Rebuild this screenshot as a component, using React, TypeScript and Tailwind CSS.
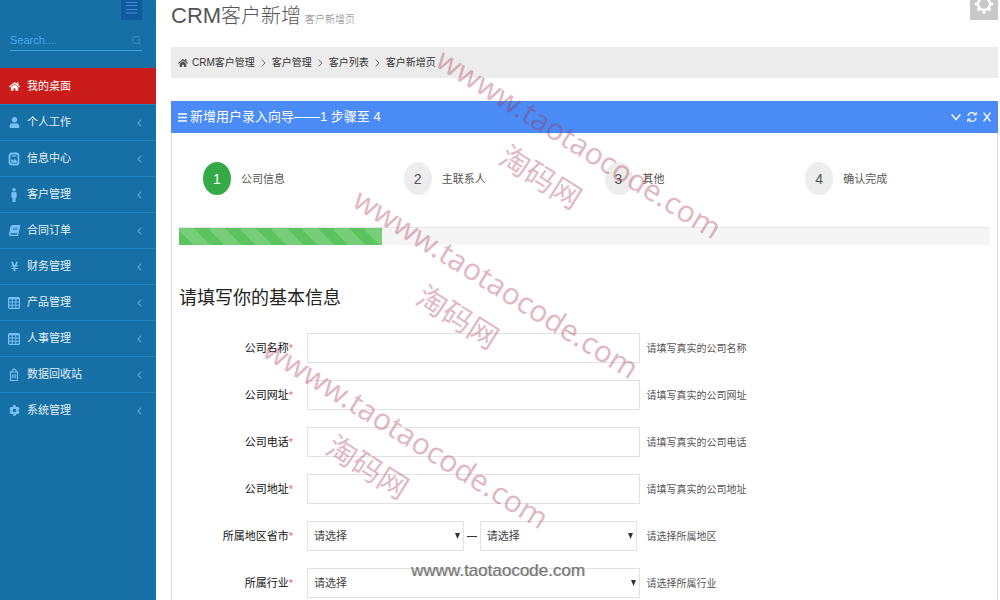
import type { ReactNode } from "react";
import { FaBook, FaCog, FaHome, FaMale, FaUser, FaYenSign } from "react-icons/fa";
import { Search } from "lucide-react";

const InfoIcon = () => (
  <svg viewBox="0 0 12 14" className="w-3 h-3.5" fill="none" stroke="currentColor">
    <rect x="1.5" y="1.5" width="9" height="11" rx="2" strokeWidth="1.8" />
    <path d="M3.5 4h5" strokeWidth="1.2" />
    <path d="M3.5 10.5V7.5l2 1.5 1-2 2 2v1.5z" fill="currentColor" strokeWidth="0.6" />
  </svg>
);

const TableIcon = () => (
  <svg viewBox="0 0 12 12" className="w-3 h-3" fill="none" stroke="currentColor">
    <rect x="0.6" y="0.6" width="10.8" height="10.8" rx="1" strokeWidth="1.2" />
    <path d="M0.6 1.6h10.8" strokeWidth="1.6" />
    <path d="M4.2 1v10.4M7.8 1v10.4M0.6 5h10.8M0.6 8.2h10.8" strokeWidth="1" />
  </svg>
);

const BinIcon = () => (
  <svg viewBox="0 0 12 14" className="w-3 h-3.5" fill="none" stroke="currentColor">
    <path d="M1.5 4h9M2.5 4v8.5h7V4M4 4V2.2L6 1l2 1.2V4" strokeWidth="1.1" />
    <path d="M4.3 6.2v4M6 6.2v4M7.7 6.2v4" strokeWidth="0.9" />
  </svg>
);

const menu: { label: string; icon: ReactNode; active?: boolean }[] = [
  { label: "我的桌面", icon: <FaHome />, active: true },
  { label: "个人工作", icon: <FaUser /> },
  { label: "信息中心", icon: <InfoIcon /> },
  { label: "客户管理", icon: <FaMale className="w-3.5 h-3.5 shrink-0" /> },
  { label: "合同订单", icon: <FaBook className="-skew-x-12" /> },
  { label: "财务管理", icon: <FaYenSign /> },
  { label: "产品管理", icon: <TableIcon /> },
  { label: "人事管理", icon: <TableIcon /> },
  { label: "数据回收站", icon: <BinIcon /> },
  { label: "系统管理", icon: <FaCog /> },
];

const crumbs = ["CRM客户管理", "客户管理", "客户列表", "客户新增页"];
const steps = ["公司信息", "主联系人", "其他", "确认完成"];

const textFields = [
  { id: "name", label: "公司名称", hint: "请填写真实的公司名称" },
  { id: "site", label: "公司网址", hint: "请填写真实的公司网址" },
  { id: "phone", label: "公司电话", hint: "请填写真实的公司电话" },
  { id: "address", label: "公司地址", hint: "请填写真实的公司地址" },
];

const watermarks = [
  { url: "left-[449px] top-[41px]", name: "left-[512px] top-[138px]" },
  { url: "left-[366px] top-[181px]", name: "left-[429px] top-[278px]" },
  { url: "left-[276px] top-[331px]", name: "left-[339px] top-[428px]" },
];

function Sidebar() {
  return (
    <aside className="w-[156px] shrink-0 bg-[#166fa5]">
      <div className="flex justify-end pr-3.5">
        <button aria-label="menu" className="w-[21px] h-5 bg-[#0f5c9c] text-[#3f8fd0] flex justify-center">
          <svg viewBox="0 0 11 14" className="w-[11px] h-3.5" stroke="currentColor">
            <path d="M0 2.5h11M0 5.5h11M0 9.5h11M0 13h11" />
          </svg>
        </button>
      </div>
      <form className="ml-2.5 mr-3.5 mt-2.5 mb-[17px] h-[21px] border-b border-[#3ba0dc] flex items-center">
        <input
          aria-label="Search"
          placeholder="Search...."
          className="min-w-0 flex-1 text-[11px] text-white placeholder:text-[#4aa9e6] outline-none"
        />
        <button type="button" aria-label="Search" className="text-[#3592cc]">
          <Search size={11} />
        </button>
      </form>
      <nav>
        <ul>
          {menu.map((m) => (
            <li key={m.label}>
              <a
                href="#"
                className={
                  m.active
                    ? "flex items-center h-9 px-2 pt-px text-[11px] text-white bg-[#cb1c1c]"
                    : "flex items-center h-9 px-2 text-[11px] text-[#e3f1fa] border-t border-[#1f86c6]"
                }
              >
                <span className={m.active ? "w-3 mr-[7px] flex justify-center" : "w-3 mr-[7px] flex justify-center text-[#74c2f3]"}>
                  {m.icon}
                </span>
                {m.label}
                {!m.active && (
                  <svg viewBox="0 0 5 8" className="w-[5px] h-2 ml-auto mr-1.5" fill="none" stroke="#4aa9e6" strokeWidth="1.2">
                    <path d="M4.2 0.6L1 4l3.2 3.4" />
                  </svg>
                )}
              </a>
            </li>
          ))}
        </ul>
      </nav>
    </aside>
  );
}

function Row({ id, label, hint, children }: { id: string; label: string; hint: string; children: ReactNode }) {
  return (
    <div className="flex items-center h-[30px]">
      <label htmlFor={id} className="w-32 shrink-0 pr-3.5 flex justify-end text-[11px] text-[#111]">
        <span>{label}</span>
        <span className="text-[#e86a6a]">*</span>
      </label>
      {children}
      <span className="ml-[7px] text-[10px] text-[#555] whitespace-nowrap">{hint}</span>
    </div>
  );
}

function Select({ id, label }: { id: string; label: string }) {
  return (
    <div className="relative flex-1">
      <select
        id={id}
        aria-label={label}
        className="block w-full h-[30px] pl-1.5 text-[11px] text-[#444] bg-white border border-[#e2e2e2] appearance-none outline-none"
      >
        <option>请选择</option>
      </select>
      <svg viewBox="0 0 5 6" className="absolute right-1 top-3 w-[5px] h-1.5 pointer-events-none" fill="#333">
        <path d="M0 0h5L2.5 6z" />
      </svg>
    </div>
  );
}

function Wizard() {
  return (
    <section className="flex-1 flex flex-col border-x border-[#d9dfe6]">
      <header className="-mx-px h-8 px-[7px] flex items-center bg-[#4a8bf5] text-white">
        <svg viewBox="0 0 9 9" className="w-[9px] h-[9px] mr-[3px]" stroke="currentColor" strokeWidth="1.7">
          <path d="M0 1h9M0 4.5h9M0 8h9" />
        </svg>
        <h2 className="text-[13px]">新增用户录入向导——1 步骤至 4</h2>
        <div className="ml-auto flex items-center gap-1.5">
          <button aria-label="collapse">
            <svg viewBox="0 0 10 10" className="w-2.5 h-2.5" fill="none" stroke="currentColor" strokeWidth="1.4">
              <path d="M0.7 2.5L5 7.5l4.3-5" />
            </svg>
          </button>
          <button aria-label="reload">
            <svg viewBox="0 0 10 12" className="w-2.5 h-3" fill="none" stroke="currentColor" strokeWidth="1.3">
              <path d="M1 5C1.4 2.8 3 1.6 5 1.6c1.4 0 2.6.7 3.5 1.9M9 7c-.4 2.2-2 3.4-4 3.4-1.4 0-2.6-.7-3.5-1.9" />
              <path d="M9.2 1v3H6.4M.8 11V8h2.8" strokeWidth="1" />
            </svg>
          </button>
          <button aria-label="close">
            <svg viewBox="0 0 8 10" className="w-2 h-2.5" fill="none" stroke="currentColor" strokeWidth="1.4">
              <path d="M0.6 0.6l6.8 8.8M7.4 0.6L0.6 9.4" />
            </svg>
          </button>
        </div>
      </header>

      <div className="px-[7px]">
        <ol className="mt-[29px] mr-2 grid grid-cols-4">
          {steps.map((s, i) => (
            <li key={s} className="pl-6 flex items-center text-[11px] text-[#555]">
              <span
                className={
                  i === 0
                    ? "w-7 h-[33px] mr-2.5 rounded-[50%] bg-[#35aa47] text-white text-sm flex items-center justify-center"
                    : "w-7 h-[33px] mr-2.5 rounded-[50%] bg-[#ededed] text-[#555] text-sm flex items-center justify-center"
                }
              >
                {i + 1}
              </span>
              <span className="pt-0.5">{s}</span>
            </li>
          ))}
        </ol>

        <div className="mt-8 h-[18px] bg-[#f5f5f5] border-t border-[#e6e6e6]">
          <div className="w-1/4 h-[17px] bg-[#5cc45e] bg-[linear-gradient(45deg,rgba(255,255,255,.17)_25%,transparent_25%,transparent_50%,rgba(255,255,255,.17)_50%,rgba(255,255,255,.17)_75%,transparent_75%)] bg-[length:31px_36px]" />
        </div>

        <h3 className="mt-10 mb-[22px] text-lg leading-[26px] text-[#222]">请填写你的基本信息</h3>

        <form className="flex flex-col gap-[17px]">
          {textFields.map((f) => (
            <Row key={f.id} id={f.id} label={f.label} hint={f.hint}>
              <input
                id={f.id}
                type="text"
                className="w-[41%] h-[30px] px-2 text-[11px] border border-[#e2e2e2] outline-none"
              />
            </Row>
          ))}
          <Row id="province" label="所属地区省市" hint="请选择所属地区">
            <div className="w-[41%] pr-[3px] flex items-center">
              <Select id="province" label="省" />
              <span className="w-2.5 h-px mx-[3px] bg-[#333]" />
              <Select id="city" label="市" />
            </div>
          </Row>
          <Row id="industry" label="所属行业" hint="请选择所属行业">
            <div className="w-[41%] flex">
              <Select id="industry" label="所属行业" />
            </div>
          </Row>
        </form>
      </div>
    </section>
  );
}

export default function App() {
  return (
    <div className="relative flex min-h-screen overflow-hidden bg-white font-['Liberation_Sans','Noto_Sans_CJK_SC',sans-serif]">
      <Sidebar />
      <main className="flex-1 min-w-0 pl-[15px] pr-0.5 flex flex-col">
        <div className="flex items-start justify-between h-[47px]">
          <h1 className="text-[22px] leading-8 text-[#555] font-light">
            CRM<span className="text-[20px]">客户新增</span>
            <small className="ml-1 text-[10px] text-[#777]">客户新增页</small>
          </h1>
          <button aria-label="settings" className="w-7 h-5 bg-[#c8c8c8] text-white flex justify-center overflow-hidden">
            <svg viewBox="0 0 20 20" className="w-5 h-5 -mt-1.5 shrink-0" fill="none" stroke="currentColor">
              <circle cx="10" cy="10" r="6" strokeWidth="2.4" />
              <path
                d="M10 1v3M10 16v3.4M1 10h3M16 10h3M3.6 3.6l2.2 2.2M14.2 14.2l2.2 2.2M3.6 16.4l2.2-2.2M14.2 5.8l2.2-2.2"
                strokeWidth="3"
              />
            </svg>
          </button>
        </div>

        <ul className="h-[31px] mb-[23px] px-[7px] flex items-center bg-[#ececec] text-[10px] text-[#333]">
          <li className="mr-1 text-[#555]">
            <FaHome className="w-2.5 h-2.5" />
          </li>
          {crumbs.map((c, i) => (
            <li key={c} className="flex items-center">
              {i > 0 && (
                <svg viewBox="0 0 5 8" className="w-[5px] h-2 mx-1.5" fill="none" stroke="#666">
                  <path d="M0.8 0.6L4 4 0.8 7.4" />
                </svg>
              )}
              <a href="#">{c}</a>
            </li>
          ))}
        </ul>

        <Wizard />
      </main>

      {/* Watermarks over the page */}
      <div className="absolute inset-0 pointer-events-none whitespace-nowrap text-[#a8304a]/35 font-['Noto_Sans','Noto_Sans_CJK_SC',sans-serif]">
        {watermarks.map((w) => (
          <div key={w.url}>
            <span className={`absolute origin-top-left rotate-[32deg] text-3xl leading-9 ${w.url}`}>wwww.taotaocode.com</span>
            <span className={`absolute origin-top-left rotate-[32deg] text-3xl leading-9 ${w.name}`}>淘码网</span>
          </div>
        ))}
      </div>
      <p className="absolute left-[411px] top-[560px] text-[17px] leading-[22px] text-[#777] [text-shadow:1px_0_0_#ccc] pointer-events-none">
        wwww.taotaocode.com
      </p>
    </div>
  );
}
